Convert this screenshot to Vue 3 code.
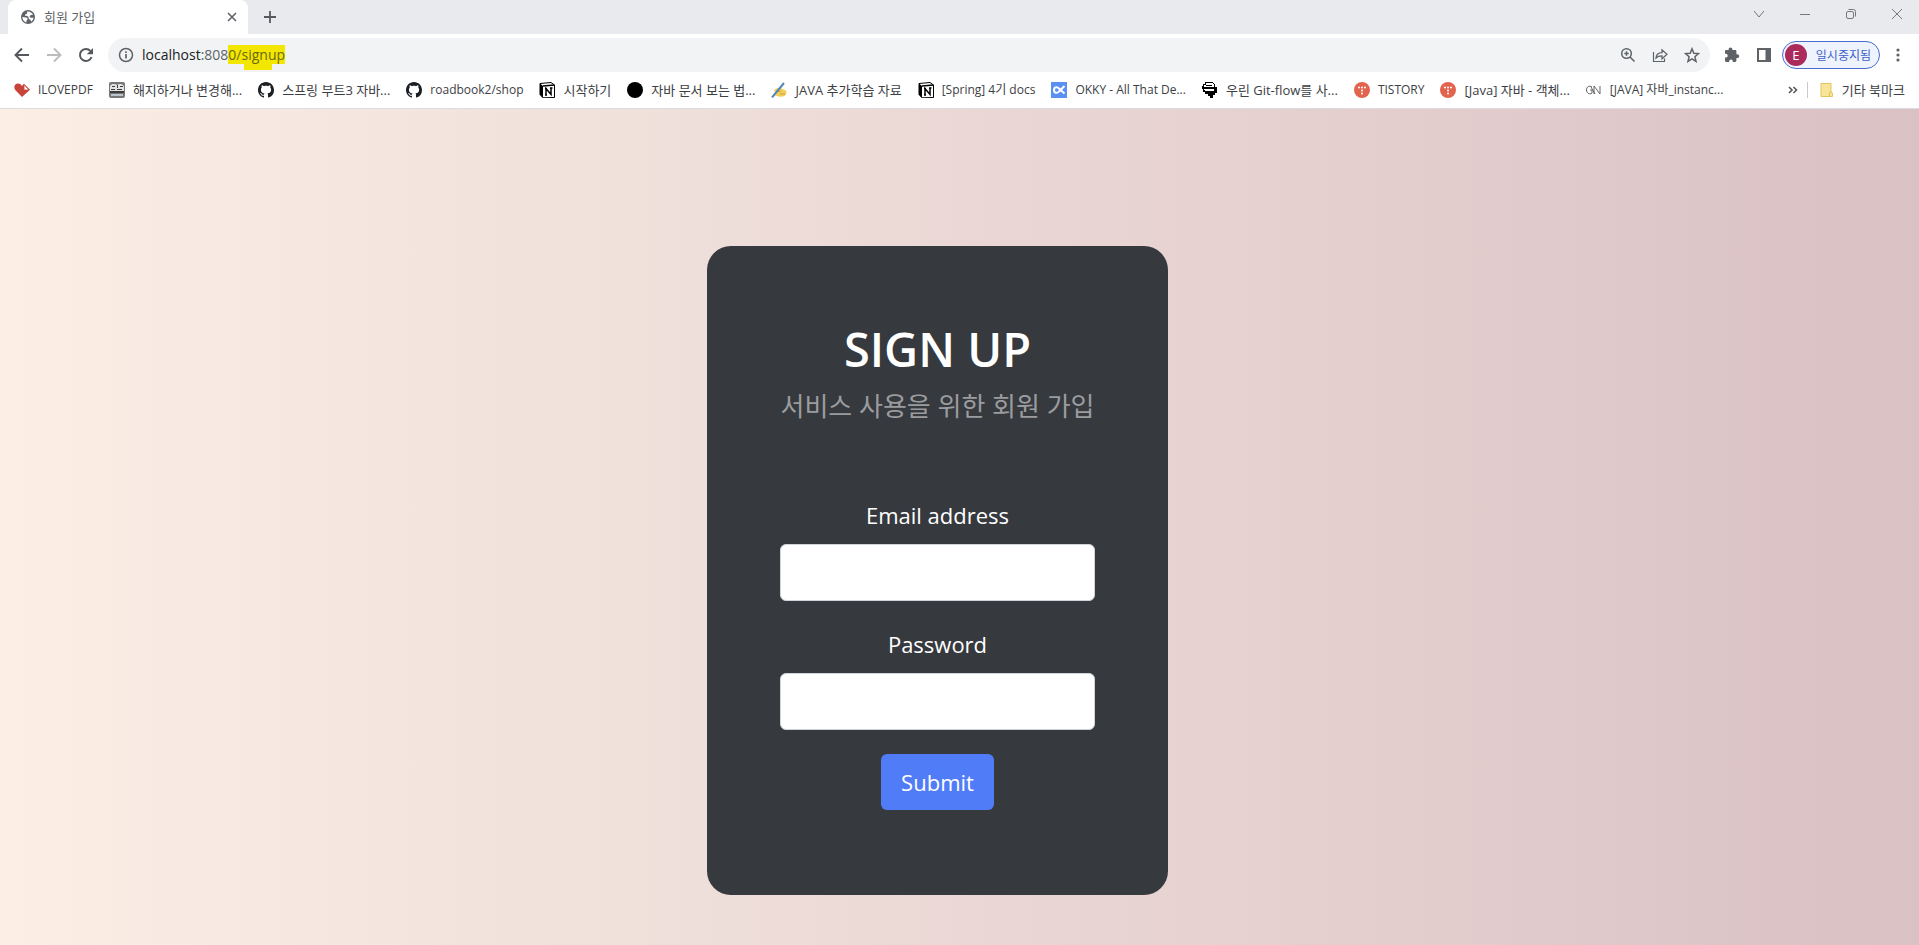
<script setup>
import { ref } from "vue";

const email = ref("");
const password = ref("");

const bookmarks = [
  { icon: "heart", label: "ILOVEPDF", latin: true },
  { icon: "photo", label: "해지하거나 변경해..." },
  { icon: "github", label: "스프링 부트3 자바..." },
  { icon: "github", label: "roadbook2/shop", latin: true },
  { icon: "notion", label: "시작하기" },
  { icon: "dot", label: "자바 문서 보는 법..." },
  { icon: "writing", label: "JAVA 추가학습 자료" },
  { icon: "notion", label: "[Spring] 4기 docs", latin: true },
  { icon: "okky", label: "OKKY - All That De...", latin: true },
  { icon: "helmet", label: "우린 Git-flow를 사..." },
  { icon: "tistory", label: "TISTORY", latin: true },
  { icon: "tistory", label: "[Java] 자바 - 객체..." },
  { icon: "gn", label: "[JAVA] 자바_instanc...", latin: true },
];
</script>

<template>
  <div class="window">
    <header class="browser">
      <div class="tab-strip">
        <div class="tab">
          <svg class="tab-icon" viewBox="0 0 16 16">
            <circle cx="8" cy="8" r="7" fill="#5f6368" />
            <path
              d="M2.400 8L6 8.600c1.500.3 2 1 1.200 2.200L6.300 12.200l.3 1.400C4 13 2.300 10.700 2.400 8zM7 2.500c2.500-.4 5 .9 6.100 3.200l-2.300.2-1.300 1.600 1 1.200 3 .1c-.1 1.500-1 3-2.300 3.900l-.8-2-1.600-.8-.3-2L7 6.800l-1.800.1V5.500L7.200 4.500z"
              fill="#fff"
            />
          </svg>
          <span class="tab-title">회원 가입</span>
          <button class="icon-button tab-close" type="button" aria-label="Close tab">
            <svg viewBox="0 0 16 16">
              <path d="M4 4l8 8M12 4l-8 8" stroke="#5f6368" stroke-width="1.600" />
            </svg>
          </button>
        </div>
        <button class="icon-button new-tab" type="button" aria-label="New tab">
          <svg viewBox="0 0 16 16">
            <path d="M8 2v12M2 8h12" stroke="#55595e" stroke-width="1.800" />
          </svg>
        </button>
        <div class="window-controls">
          <button class="icon-button" type="button" aria-label="Search tabs">
            <svg viewBox="0 0 16 16">
              <path d="M3 5l5 6 5-6" fill="none" stroke="#777" />
            </svg>
          </button>
          <button class="icon-button" type="button" aria-label="Minimize">
            <svg viewBox="0 0 16 16">
              <path d="M3 8.500h10" stroke="#777" />
            </svg>
          </button>
          <button class="icon-button" type="button" aria-label="Restore">
            <svg viewBox="0 0 16 16">
              <rect x="3.500" y="5.500" width="7" height="7" rx="1.500" fill="none" stroke="#777" />
              <path d="M5.500 3.500h5a2 2 0 0 1 2 2v5" fill="none" stroke="#777" />
            </svg>
          </button>
          <button class="icon-button" type="button" aria-label="Close">
            <svg viewBox="0 0 16 16">
              <path d="M3 3l10 10M13 3L3 13" stroke="#777" />
            </svg>
          </button>
        </div>
      </div>

      <div class="toolbar">
        <div class="button-group">
          <button class="icon-button" type="button" aria-label="Back">
            <svg viewBox="0 0 16 16">
              <path d="M15 8H2M8 1.500L1.500 8 8 14.500" fill="none" stroke="#55595e" stroke-width="1.900" />
            </svg>
          </button>
          <button class="icon-button" type="button" aria-label="Forward">
            <svg viewBox="0 0 16 16">
              <path d="M1 8h13M8 1.500L14.500 8 8 14.500" fill="none" stroke="#babcbe" stroke-width="1.900" />
            </svg>
          </button>
          <button class="icon-button" type="button" aria-label="Reload">
            <svg viewBox="0 0 16 16">
              <path d="M13.600 10A6 6 0 1 1 12.400 3.900" fill="none" stroke="#55595e" stroke-width="2" />
              <path d="M15 1v6.200H8.800z" fill="#55595e" />
            </svg>
          </button>
        </div>
        <div class="address">
          <svg class="info" viewBox="0 0 16 16">
            <circle cx="8" cy="8" r="6.500" fill="none" stroke="#5f6368" stroke-width="1.500" />
            <path d="M8 7v4.500M8 4.300v1.700" stroke="#5f6368" stroke-width="1.700" />
          </svg>
          <a class="url" href="#"
            >localhost<span class="port">:808</span
            ><mark class="marked">0/signup</mark></a
          >
          <div class="button-group address-actions">
            <button class="icon-button" type="button" aria-label="Zoom">
              <svg viewBox="0 0 16 16">
                <circle cx="6.500" cy="6.500" r="4.800" fill="none" stroke="#5f6368" stroke-width="1.500" />
                <path d="M10 10l4.500 4.500M6.500 4.300v4.400M4.300 6.500h4.400" stroke="#5f6368" stroke-width="1.500" />
              </svg>
            </button>
            <button class="icon-button" type="button" aria-label="Share">
              <svg viewBox="0 0 16 16">
                <path
                  d="M1.500 5v9.500h11V11.500M4 11c.3-3.500 2.500-5.200 6-5.300V2.800l5 4.500-5 4.500V8.900c-3 0-4.600.5-6 2.100z"
                  fill="none"
                  stroke="#5f6368"
                  stroke-width="1.200"
                />
              </svg>
            </button>
            <button class="icon-button" type="button" aria-label="Bookmark this page">
              <svg viewBox="0 0 16 16">
                <path
                  d="M8 1.800l1.800 4.400 4.700.4-3.600 3.100 1.100 4.600L8 11.800l-4 2.500 1.100-4.600-3.600-3.100 4.700-.4z"
                  fill="none"
                  stroke="#5f6368"
                  stroke-width="1.500"
                />
              </svg>
            </button>
          </div>
        </div>
        <div class="button-group">
          <button class="icon-button" type="button" aria-label="Extensions">
            <svg viewBox="0 0 16 16">
              <path
                d="M13.300 7.300h-.9V4.200c0-.7-.6-1.200-1.200-1.200H8.400v-.7a1.900 1.900 0 0 0-3.800 0V3H2.200C1.500 3 1 3.500 1 4.200v2.600h.8a1.900 1.900 0 0 1 0 3.800H1v3.200c0 .7.500 1.200 1.200 1.200h3v-.8a1.800 1.800 0 0 1 3.600 0v.8h2.400c.6 0 1.200-.5 1.200-1.200v-2.700h.9a1.900 1.900 0 0 0 0-3.800z"
                fill="#5f6368"
              />
            </svg>
          </button>
          <button class="icon-button" type="button" aria-label="Side panel">
            <svg viewBox="0 0 16 16">
              <path d="M1 1h14v14H1zM3 3v10h6.500V3z" fill="#5f6368" fill-rule="evenodd" />
            </svg>
          </button>
        </div>
        <div class="account">
          <button class="profile" type="button">
            <span class="avatar">E</span>
            <span>일시중지됨</span>
          </button>
          <button class="icon-button" type="button" aria-label="Menu">
            <svg viewBox="0 0 16 16">
              <g fill="#5f6368">
                <circle cx="8" cy="3" r="1.600" />
                <circle cx="8" cy="8" r="1.600" />
                <circle cx="8" cy="13" r="1.600" />
              </g>
            </svg>
          </button>
        </div>
      </div>

      <nav class="bookmarks">
        <a
          v-for="(item, i) in bookmarks"
          :key="i"
          class="bookmark"
          :class="{ latin: item.latin }"
          href="#"
        >
          <svg viewBox="0 0 16 16">
            <template v-if="item.icon === 'heart'">
              <path d="M8 15L1.200 8C-.6 5.500.4 2 3.500 1.600 5.500 1.300 7 2.300 8 4l2-2.200 6 6z" fill="#c8443a" />
              <path d="M10 2.500L15 8h-5z" fill="#fff" stroke="#c8443a" stroke-width=".8" />
            </template>
            <template v-else-if="item.icon === 'photo'">
              <rect width="16" height="16" rx="2" fill="#777" />
              <path d="M1 4c2-3 5-2 7-1 2-1.500 5-1.500 7 1v5H1z" fill="#e4e4e4" />
              <path d="M3 4h3v1H3zM8 3h1v3H8zM11 4h3v1h-3zM2 7h4v1H2zM8 7h5v1H8zM1 9h14v2H1z" fill="#3c3c3c" />
              <path d="M2 12h12v2H2z" fill="#b9c4cc" />
            </template>
            <path
              v-else-if="item.icon === 'github'"
              d="M8 0C3.580 0 0 3.580 0 8c0 3.540 2.290 6.530 5.470 7.590.4.070.55-.17.55-.38 0-.19-.01-.82-.01-1.490-2.010.37-2.530-.49-2.690-.94-.09-.23-.48-.94-.82-1.130-.28-.15-.68-.52-.01-.53.63-.01 1.080.58 1.230.82.72 1.210 1.870.87 2.330.66.07-.52.28-.87.51-1.070-1.780-.2-3.640-.89-3.640-3.950 0-.87.31-1.590.82-2.150-.08-.2-.36-1.020.08-2.120 0 0 .67-.21 2.200.82.64-.18 1.320-.27 2-.27s1.360.09 2 .27c1.530-1.040 2.200-.82 2.200-.82.44 1.100.16 1.920.08 2.120.51.56.82 1.270.82 2.150 0 3.070-1.870 3.750-3.650 3.950.29.25.54.73.54 1.480 0 1.070-.01 1.930-.01 2.200 0 .21.15.46.55.38A8.010 8.010 0 0 0 16 8c0-4.420-3.580-8-8-8z"
              fill="#1b1f23"
            />
            <template v-else-if="item.icon === 'notion'">
              <path d="M1 1.500L12 .5 15.500 3v12.500L4 15.800 1 12.500z" fill="#fff" stroke="#000" />
              <path d="M1 1.500L4 4v11.800L1 12.500z" fill="#000" />
              <path d="M4 4l11.500-1" stroke="#000" stroke-width="1.400" />
              <path d="M7 13V6.500l5 6V6M6 6.500h2M11 6h2.500M6 13h2" fill="none" stroke="#000" stroke-width="1.500" />
            </template>
            <circle v-else-if="item.icon === 'dot'" cx="8" cy="8" r="8" />
            <template v-else-if="item.icon === 'writing'">
              <path d="M3 9c0-2 3-3.500 6-3l5 2c2 1 2 4 0 5.500-2 1.500-6 1.500-8 .5l-3-1 3-2z" fill="#f2cf5b" />
              <path d="M5 10l5-1M9 12h5" stroke="#cf9e32" />
              <path d="M1 15.500L13 1" stroke="#5287bd" stroke-width="2" />
            </template>
            <template v-else-if="item.icon === 'okky'">
              <path d="M0 0h16v16H0z" fill="#5990f1" />
              <path
                d="M13.500 4L8 9.500C6.500 11.500 3 11.500 3 8s3.500-3.500 5-1.500l5.500 5"
                fill="none"
                stroke="#fff"
                stroke-width="2"
              />
            </template>
            <template v-else-if="item.icon === 'helmet'">
              <path d="M3 0h8v1h1v1h1v3h2v6h-2v2h-2v3H8v-2H6v-2H3v-2H1V7H0V4h1V2h2z" fill="#000" />
              <path d="M4 1h7v1h1v3H2V3h2zM2 7h10v2H3V8H2z" fill="#fff" />
              <path d="M4 3.500h6" stroke="#000" />
            </template>
            <template v-else-if="item.icon === 'tistory'">
              <circle cx="8" cy="8" r="8" fill="#e2644e" />
              <g fill="#fff">
                <circle cx="5" cy="5.500" r="1" />
                <circle cx="8" cy="5.500" r="1" />
                <circle cx="11" cy="5.500" r="1" />
                <circle cx="8" cy="8.500" r="1" />
                <circle cx="8" cy="11.500" r="1" />
              </g>
            </template>
            <path
              v-else
              d="M6 5C3 3 .5 5 .5 8s3 5 5.500 3V8H4M8 12V4l6 8V4M5 5l4 7"
              fill="none"
              stroke="#555"
              stroke-width=".9"
            />
          </svg>
          <span>{{ item.label }}</span>
        </a>
        <div class="bookmarks-end">
          <button class="icon-button" type="button" aria-label="More bookmarks">
            <svg viewBox="0 0 16 16">
              <path d="M4 5l3 3-3 3M8.500 5l3 3-3 3" fill="none" stroke="#55595e" stroke-width="1.600" />
            </svg>
          </button>
          <a class="bookmark other" href="#">
            <svg viewBox="0 0 16 16">
              <path d="M3 1.500h10V10l1.500 1v3.500H3z" fill="#f8e59a" stroke="#e0c55c" />
              <path d="M11.500 14.500V11a1 1 0 0 1 2 0" fill="none" stroke="#e0c55c" />
            </svg>
            <span>기타 북마크</span>
          </a>
        </div>
      </nav>
    </header>

    <main class="page">
      <section class="card">
        <h2 class="title">SIGN UP</h2>
        <p class="subtitle">서비스 사용을 위한 회원 가입</p>
        <form class="form" @submit.prevent>
          <div class="field">
            <label for="email">Email address</label>
            <input id="email" v-model="email" type="email" name="username" />
          </div>
          <div class="field">
            <label for="password">Password</label>
            <input id="password" v-model="password" type="password" name="password" />
          </div>
          <button class="submit" type="submit">Submit</button>
        </form>
      </section>
    </main>
  </div>
</template>

<style>
body {
  margin: 0;
}
</style>

<style scoped>
.window {
  display: flex;
  flex-direction: column;
  min-height: 100vh;
  font-family: "Open Sans", "Noto Sans CJK KR", sans-serif;
}

.window * {
  box-sizing: border-box;
}

svg {
  display: block;
  width: 16px;
  height: 16px;
  flex-shrink: 0;
}

button,
input {
  font-family: inherit;
}

a {
  color: inherit;
  text-decoration: none;
}

.icon-button {
  padding: 0;
  border: 0;
  background: none;
}

.browser {
  background: #fff;
  border-bottom: 1px solid #dadce0;
  color: #3c4043;
  font-size: 13px;
}

.tab-strip {
  display: flex;
  align-items: center;
  height: 34px;
  padding-left: 8px;
  background: #e8eaed;
}

.tab {
  display: flex;
  align-items: center;
  gap: 8px;
  width: 240px;
  height: 34px;
  padding: 0 8px 0 12px;
  border-radius: 8px 8px 0 0;
  background: #fff;
}

.tab-title {
  flex: 1;
  color: #5f6368;
  line-height: 16px;
}

.new-tab {
  margin-left: 14px;
}

.window-controls {
  display: flex;
  gap: 30px;
  margin-left: auto;
  padding: 0 14px 6px 0;
}

.toolbar {
  display: flex;
  align-items: center;
  gap: 14px;
  height: 42px;
  padding: 0 13px 0 14px;
}

.button-group {
  display: flex;
  gap: 16px;
}

.address {
  display: flex;
  flex: 1;
  align-items: center;
  height: 34px;
  padding: 0 10px;
  border-radius: 17px;
  background: #f1f3f4;
}

.url {
  margin-left: 8px;
  color: #202124;
  font-size: 14px;
  line-height: 20px;
}

.port {
  color: #5f6368;
}

.marked {
  position: relative;
  background: #f3e600;
  color: #6b6a10;
}

/* tail of the marker stroke below the text */
.marked::after {
  content: "";
  position: absolute;
  top: 100%;
  left: 16px;
  width: 28px;
  height: 6px;
  background: #f3e600;
}

.address-actions {
  margin-left: auto;
}

.account {
  display: flex;
  align-items: center;
  gap: 10px;
  margin-left: -4px;
}

.profile {
  display: flex;
  align-items: center;
  gap: 9px;
  height: 28px;
  padding: 0 8px 0 2px;
  border: 1px solid #4a6bd0;
  border-radius: 14px;
  background: #eef3fd;
  color: #3d5fc9;
  font-size: 12px;
}

.avatar {
  width: 22px;
  height: 22px;
  border-radius: 50%;
  background: #ab2a5c;
  color: #fff;
  font-size: 13px;
  line-height: 22px;
  text-align: center;
}

.bookmarks {
  display: flex;
  align-items: center;
  gap: 16px;
  height: 32px;
  padding: 0 14px 4px;
}

.bookmark {
  display: flex;
  align-items: center;
  gap: 8px;
  line-height: 16px;
  white-space: nowrap;
}

.latin {
  font-size: 12px;
}

.bookmarks-end {
  display: flex;
  align-items: center;
  gap: 6px;
  margin-left: auto;
}

.other {
  padding-left: 10px;
  border-left: 1px solid #c8cace;
}

.page {
  display: flex;
  flex: 1;
  align-items: flex-start;
  justify-content: center;
  padding: 137px 44px 50px 0;
  background: linear-gradient(to right, #fceee5, #f1e3dc 28%, #ead7d5 52%, #dac1c3);
}

.card {
  padding: 72px 73px 85px;
  border-radius: 24px;
  background: #36393e;
  color: #fff;
  text-align: center;
}

.title {
  margin: 0 0 8px;
  font-size: 47px;
  font-weight: 600;
  line-height: 62px;
}

.subtitle {
  margin: 0;
  color: #9b9c9e;
  font-size: 26px;
  line-height: 36px;
}

.form {
  display: flex;
  flex-direction: column;
  align-items: center;
  gap: 24px;
  margin-top: 72px;
}

.field {
  display: flex;
  flex-direction: column;
  gap: 10px;
  width: 315px;
}

.field label {
  font-size: 22px;
  line-height: 38px;
}

.field input {
  width: 100%;
  height: 57px;
  padding: 8px 18px;
  border: 1px solid #ced4da;
  border-radius: 6px;
  background: #fff;
  font-size: 22px;
}

.submit {
  height: 56px;
  padding: 0 20px;
  border: 0;
  border-radius: 6px;
  background: #507cf7;
  color: #fff;
  font-size: 22px;
}
</style>
